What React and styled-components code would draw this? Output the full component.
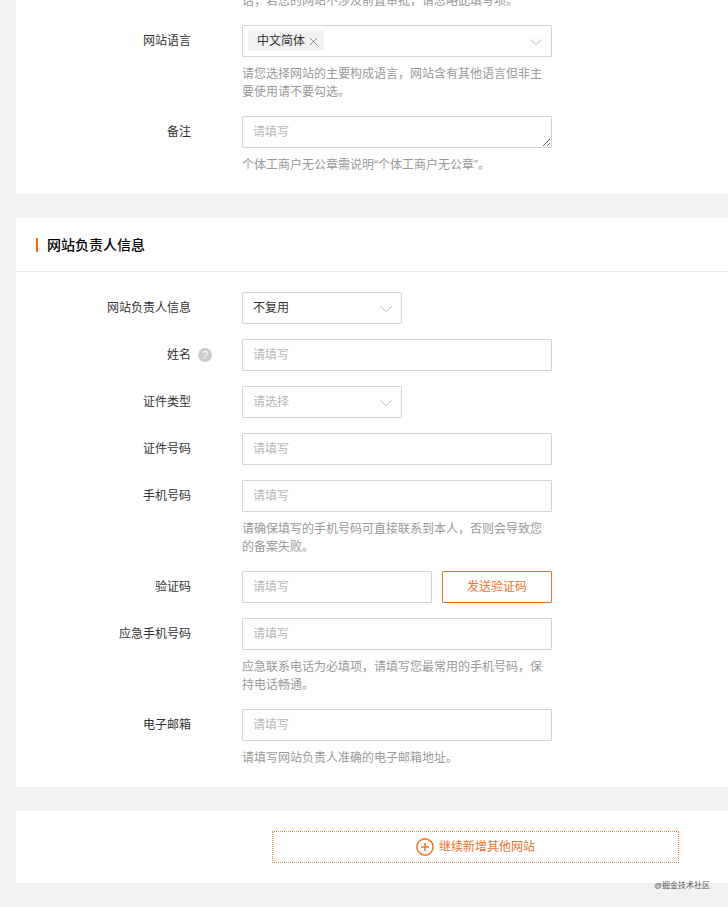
import React, { useState } from 'react'
import styled, { createGlobalStyle } from 'styled-components'

const GlobalStyle = createGlobalStyle`
  * {
    box-sizing: border-box;
  }

  body {
    margin: 0;
    background: #f2f2f2;
  }

  body,
  button,
  input,
  select,
  textarea {
    font-family: "Liberation Sans", "Noto Sans CJK SC", sans-serif;
    font-size: 12px;
    line-height: 18px;
  }
`

const Page = styled.main`
  position: relative;
  display: flex;
  flex-direction: column;
  gap: 24px;
  padding: 0 0 24px 16px;
  color: #333;
`

const Panel = styled.section`
  background: #fff;
`

const PanelHeader = styled.header`
  display: flex;
  align-items: center;
  gap: 9px;
  height: 54px;
  padding: 0 20px;
  border-bottom: 1px solid #ebebeb;

  &::before {
    content: '';
    width: 2px;
    height: 14px;
    background: #ff6a00;
  }
`

const PanelTitle = styled.h2`
  margin: 0;
  font-size: 14px;
  font-weight: 500;
  line-height: 20px;
  color: #000;
`

const Rows = styled.div`
  display: flex;
  flex-direction: column;
  gap: 15px;
  padding: ${props => props.$flush ? '0 0 20px' : '20px 0'};
`

const RowGrid = styled.div`
  display: grid;
  grid-template-columns: 175px 51px minmax(0, 310px);
`

const Label = styled.label`
  line-height: 32px;
  text-align: right;
`

const LabelExtra = styled.div`
  display: flex;
  align-items: center;
  height: 32px;
  padding-left: 7px;
`

const HelpButton = styled.button`
  width: 14px;
  height: 14px;
  padding: 0;
  border: 0;
  border-radius: 50%;
  background: #ccc;
  color: #fff;
  font-size: 11px;
  line-height: 14px;
  text-align: center;
`

const Field = styled.div`
  grid-column: 3;
  display: flex;
  flex-direction: column;
  gap: 8px;
`

const Hint = styled.p`
  margin: 0;
  color: #999;
`

// the previous row is scrolled out of view, only the end of its hint is left
const ScrolledHint = styled.div`
  grid-column: 3;
  display: flex;
  align-items: flex-end;
  height: 10px;
  overflow: hidden;
`

const Input = styled.input`
  width: 100%;
  min-width: 0;
  height: 32px;
  padding: 0 10px;
  border: 1px solid #d4d4d4;
  border-radius: 1px;
  background: #fff;
  color: #333;
  outline: none;

  &::placeholder {
    color: #b8b8b8;
  }
`

const TextArea = styled(Input).attrs({ as: 'textarea' })`
  display: block;
  padding: 6px 10px;
  resize: vertical;
  overflow: hidden;
`

const SelectBox = styled.div`
  display: grid;
  grid-template-columns: minmax(0, 1fr) 12px;
  align-items: center;
  width: 160px;
  padding-right: 9px;
  border: 1px solid #d4d4d4;
  border-radius: 1px;
`

const Select = styled.select`
  grid-area: 1 / 1 / 2 / 3;
  height: 30px;
  padding: 0 10px;
  border: 0;
  background: transparent;
  color: ${props => props.$empty ? '#b8b8b8' : '#333'};
  appearance: none;
  outline: none;
`

const Chevron = styled.svg`
  grid-area: 1 / 2;
  width: 12px;
  height: 8px;
  margin-top: 2px;
  fill: none;
  stroke: #b8b8b8;
  pointer-events: none;
`

const TagBox = styled.div`
  display: flex;
  align-items: center;
  justify-content: space-between;
  height: 32px;
  padding: 0 9px 0 5px;
  border: 1px solid #d4d4d4;
  border-radius: 1px;
`

const Tag = styled.span`
  display: flex;
  align-items: center;
  gap: 4px;
  height: 20px;
  padding: 0 6px 0 9px;
  background: #f2f2f2;
`

const IconButton = styled.button`
  display: flex;
  padding: 0;
  border: 0;
  background: transparent;
`

const CodeRow = styled.div`
  display: flex;
  gap: 10px;
`

const SendButton = styled.button`
  flex: 0 0 110px;
  height: 32px;
  border: 1px solid #e2762f;
  border-radius: 1px;
  background: #fff;
  color: #ee7430;
`

const AddArea = styled.div`
  display: flex;
  padding: 20px 49px 20px 256px;
`

const AddButton = styled.button`
  flex: 1;
  display: flex;
  align-items: center;
  justify-content: center;
  gap: 5px;
  height: 32px;
  padding: 0;
  border: 1px dotted #d98a45;
  background: #fff;
  color: #e8742c;
`

const Watermark = styled.span`
  position: absolute;
  right: 18px;
  bottom: 15px;
  font-size: 8px;
  line-height: 12px;
  color: #555;
`

function Arrow () {
  return (
    <Chevron viewBox='0 0 12 8' aria-hidden='true'>
      <path d='M0.5 1.5L6 6.5L11.5 1.5' />
    </Chevron>
  )
}

function Row ({ label, id, hint, extra, children }) {
  return (
    <RowGrid>
      <Label htmlFor={id}>{label}</Label>
      {extra && <LabelExtra>{extra}</LabelExtra>}
      <Field>
        {children}
        {hint && <Hint>{hint}</Hint>}
      </Field>
    </RowGrid>
  )
}

function TextRow ({ label, id, hint, extra, type = 'text' }) {
  return (
    <Row label={label} id={id} hint={hint} extra={extra}>
      <Input id={id} type={type} placeholder='请填写' />
    </Row>
  )
}

function SelectRow ({ label, id, options, initial }) {
  const [value, setValue] = useState(initial)

  return (
    <Row label={label} id={id}>
      <SelectBox>
        <Select
          id={id}
          value={value}
          $empty={value === '请选择'}
          onChange={(e) => setValue(e.target.value)}
        >
          {options.map((option) => (
            <option key={option}>{option}</option>
          ))}
        </Select>
        <Arrow />
      </SelectBox>
    </Row>
  )
}

function LanguageRow () {
  const [tags, setTags] = useState(['中文简体'])

  return (
    <Row
      label='网站语言'
      id='language'
      hint='请您选择网站的主要构成语言，网站含有其他语言但非主要使用请不要勾选。'
    >
      <TagBox>
        {tags.map((tag) => (
          <Tag key={tag}>
            {tag}
            <IconButton
              type='button'
              aria-label={`移除${tag}`}
              onClick={() => setTags(tags.filter((t) => t !== tag))}
            >
              <svg width='9' height='9' viewBox='0 0 9 9' fill='none' stroke='#888'>
                <path d='M1 1L8 8M8 1L1 8' />
              </svg>
            </IconButton>
          </Tag>
        ))}
        <IconButton id='language' type='button'>
          <Arrow />
        </IconButton>
      </TagBox>
    </Row>
  )
}

function App () {
  return (
    <>
      <GlobalStyle />
      <Page lang='zh-CN'>
        <Panel>
          <Rows $flush>
            <RowGrid>
              <ScrolledHint>
                <Hint>话；若您的网站不涉及前置审批，请忽略此填写项。</Hint>
              </ScrolledHint>
            </RowGrid>
            <LanguageRow />
            <Row label='备注' id='remark' hint='个体工商户无公章需说明“个体工商户无公章”。'>
              <TextArea id='remark' rows={1} placeholder='请填写' />
            </Row>
          </Rows>
        </Panel>

        <Panel>
          <PanelHeader>
            <PanelTitle>网站负责人信息</PanelTitle>
          </PanelHeader>
          <Rows>
            <SelectRow label='网站负责人信息' id='owner' options={['不复用', '复用']} initial='不复用' />
            <TextRow
              label='姓名'
              id='name'
              extra={<HelpButton type='button' aria-label='帮助'>?</HelpButton>}
            />
            <SelectRow label='证件类型' id='idType' options={['请选择', '身份证', '护照']} initial='请选择' />
            <TextRow label='证件号码' id='idNumber' />
            <TextRow
              label='手机号码'
              id='phone'
              type='tel'
              hint='请确保填写的手机号码可直接联系到本人，否则会导致您的备案失败。'
            />
            <Row label='验证码' id='code'>
              <CodeRow>
                <Input id='code' type='text' placeholder='请填写' />
                <SendButton type='button'>发送验证码</SendButton>
              </CodeRow>
            </Row>
            <TextRow
              label='应急手机号码'
              id='backupPhone'
              type='tel'
              hint='应急联系电话为必填项，请填写您最常用的手机号码，保持电话畅通。'
            />
            <TextRow
              label='电子邮箱'
              id='email'
              type='email'
              hint='请填写网站负责人准确的电子邮箱地址。'
            />
          </Rows>
        </Panel>

        <Panel>
          <AddArea>
            <AddButton type='button'>
              <svg width='18' height='18' viewBox='0 0 18 18' fill='none' stroke='#f57a2a' strokeWidth='1.6'>
                <circle cx='9' cy='9' r='8.1' />
                <path d='M9 5V13M5 9H13' />
              </svg>
              继续新增其他网站
            </AddButton>
          </AddArea>
        </Panel>
        <Watermark>@掘金技术社区</Watermark>
      </Page>
    </>
  )
}

export default App
